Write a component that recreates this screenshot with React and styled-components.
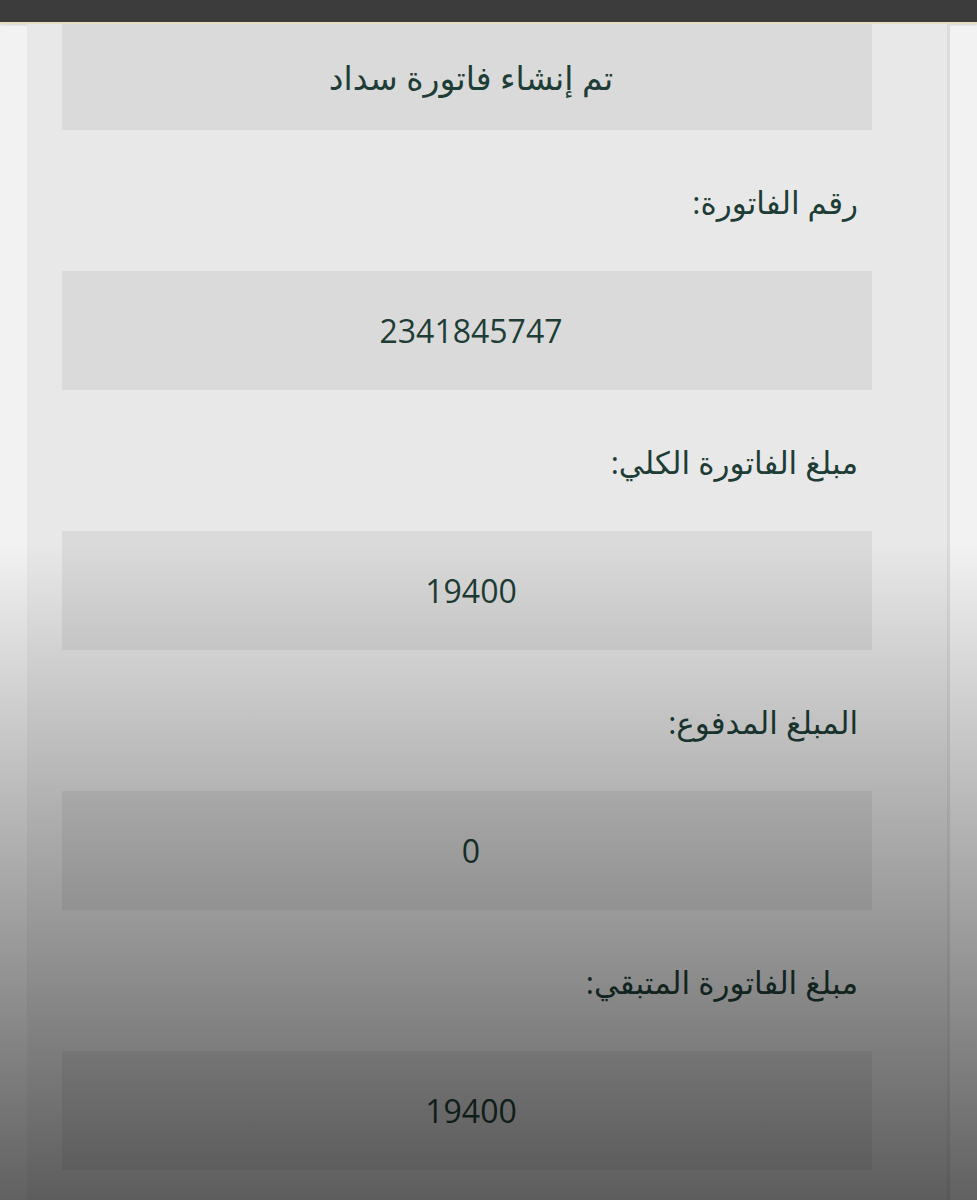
import styled, { createGlobalStyle } from 'styled-components';

const GlobalStyle = createGlobalStyle`
  html, body {
    margin: 0;
    padding: 0;
    background: #f2f2f2;
  }
  body {
    font-family: "Open Sans", "DejaVu Sans", sans-serif;
    overflow: hidden;
  }
`;

const rows = [
  { label: 'رقم الفاتورة:', value: '2341845747' },
  { label: 'مبلغ الفاتورة الكلي:', value: '19400' },
  { label: 'المبلغ المدفوع:', value: '0' },
  { label: 'مبلغ الفاتورة المتبقي:', value: '19400' },
];

const App = () => {
  return (
    <Page dir="rtl">
      <GlobalStyle />
      <TopBar />
      <Frame>
        <Panel>
          <Box $height={106} $size={33}>تم إنشاء فاتورة سداد</Box>
          {rows.map((row) => (
            <Field key={row.label}>
              <Label>{row.label}</Label>
              <Box $height={119} $size={32}>{row.value}</Box>
            </Field>
          ))}
        </Panel>
      </Frame>
    </Page>
  );
};

const Page = styled.div`
  position: relative;
  height: 1200px;
  display: flex;
  flex-direction: column;
  background: #f2f2f2;

  /* photo darkening toward the bottom */
  &::after {
    content: '';
    position: absolute;
    inset: 0;
    pointer-events: none;
    background: linear-gradient(
      to bottom,
      rgba(0, 0, 0, 0) 543px,
      rgba(0, 0, 0, 0.6) 1200px
    );
  }
`;

const TopBar = styled.div`
  height: 22px;
  flex-shrink: 0;
  background: #3c3c3c;
  border-bottom: 2px solid #e6dfc2;
  box-shadow: 0 1px 2px rgba(0, 0, 0, 0.12);
`;

const Frame = styled.div`
  flex: 1;
  display: flex;
  padding: 0 27px;
`;

const Panel = styled.div`
  flex: 1;
  display: flex;
  flex-direction: column;
  background: #e8e8e8;
  border-right: 3px solid #d9dcdf;
  padding: 0 75px 0 35px;
`;

const Field = styled.div`
  display: flex;
  flex-direction: column;
`;

const Label = styled.div`
  height: 141px;
  display: flex;
  align-items: center;
  padding: 2px 14px 0 0;
  box-sizing: border-box;
  font-size: 31px;
  color: #1d3d36;
`;

const Box = styled.div`
  height: ${(p) => p.$height}px;
  display: flex;
  align-items: center;
  justify-content: center;
  padding-left: 8px;
  background: #dadada;
  font-size: ${(p) => p.$size}px;
  color: #1d3d36;
`;

export default App;
